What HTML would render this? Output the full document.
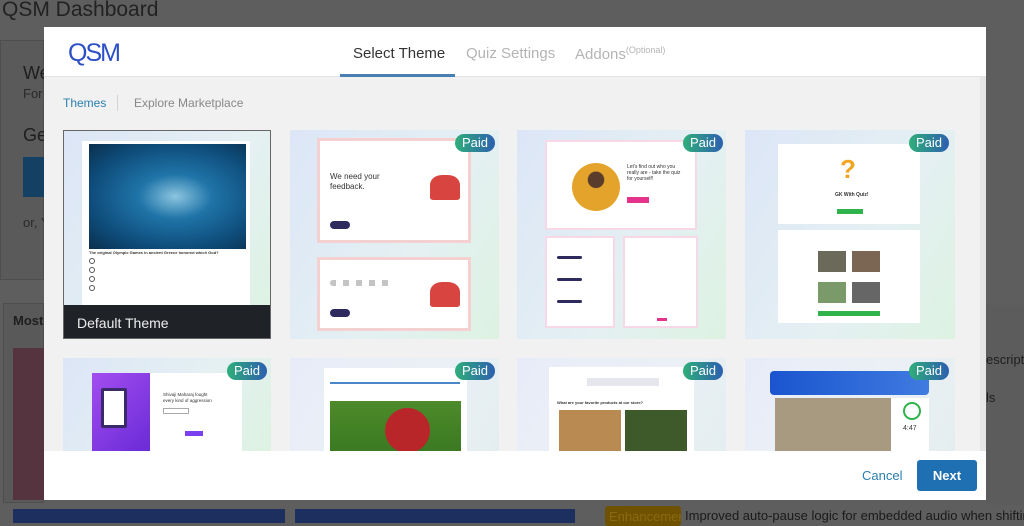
<!DOCTYPE html>
<html><head><meta charset="utf-8"><style>
*{margin:0;padding:0;box-sizing:border-box}
body{width:1024px;height:523px;overflow:hidden;background:#5e5e5e;font-family:"Liberation Sans",sans-serif;position:relative}
.a{position:absolute}
.paid{position:absolute;width:40px;height:18px;border-radius:9px;background:linear-gradient(90deg,#2fae7a,#2d5fb0);color:#fff;font-size:13px;line-height:18px;text-align:center}
.card{position:absolute;background:linear-gradient(120deg,#dce6f7,#e4f0f2 60%,#ddf2e2);overflow:hidden}
.w{position:absolute;background:#fff}
.bar{position:absolute;background:#2d2a5e;border-radius:4px}
</style></head><body>
<div class="a" style="left:2px;top:-2px;font-size:21px;color:#222">QSM Dashboard</div>
<div class="a" style="left:0;top:40px;width:44px;height:240px;background:#5a5a5a;border:1px solid #4e4e4e"></div>
<div class="a" style="left:23px;top:63px;font-size:18px;color:#1e1e1e">We</div>
<div class="a" style="left:23px;top:86px;font-size:13px;color:#2a2a2a">For</div>
<div class="a" style="left:23px;top:125px;font-size:18px;color:#1e1e1e">Ge</div>
<div class="a" style="left:23px;top:157px;width:21px;height:40px;background:#144063"></div>
<div class="a" style="left:23px;top:215px;font-size:13px;color:#2a2a2a">or, Y</div>
<div class="a" style="left:3px;top:303px;width:41px;height:200px;background:#595959;border:1px solid #4e4e4e"></div>
<div class="a" style="left:13px;top:313px;font-size:13px;font-weight:bold;color:#1e1e1e">Most</div>
<div class="a" style="left:13px;top:348px;width:31px;height:152px;background:#56343f"></div>
<div class="a" style="left:13px;top:509px;width:272px;height:14px;background:#1c2f5e"></div>
<div class="a" style="left:295px;top:509px;width:280px;height:14px;background:#1c2f5e"></div>
<div class="a" style="left:986px;top:305px;width:38px;height:200px;background:#5c5c5c"></div>
<div class="a" style="left:986px;top:352px;font-size:13px;color:#1e1e1e;white-space:nowrap">escriptio</div>
<div class="a" style="left:986px;top:390px;font-size:13px;color:#1e1e1e">ls</div>
<div class="a" style="left:605px;top:506px;width:76px;height:20px;background:#6e5200;border-radius:3px;color:#8a6a10;font-size:13px;padding:3px 4px;overflow:hidden;white-space:nowrap">Enhancement</div>
<div class="a" style="left:685px;top:508px;font-size:13px;color:#1a1a1a;white-space:nowrap">Improved auto-pause logic for embedded audio when shifting page</div>

<div class="a" style="left:44px;top:27px;width:942px;height:473px;background:#f1f1f1"></div>
<div class="a" style="left:44px;top:27px;width:942px;height:50px;background:#fff;border-bottom:1px solid #e2e2e2"></div>
<div class="a" style="left:68px;top:39px;font-size:25px;color:#2d4fc5;letter-spacing:-2px">QSM</div>
<div class="a" style="left:353px;top:45px;font-size:15px;color:#333">Select Theme</div>
<div class="a" style="left:340px;top:74px;width:115px;height:3px;background:#4a7fb3"></div>
<div class="a" style="left:466px;top:45px;font-size:15px;color:#b4b4b4">Quiz Settings</div>
<div class="a" style="left:575px;top:45px;font-size:15px;color:#b4b4b4">Addons<sup style="font-size:9px">(Optional)</sup></div>
<div class="a" style="left:63px;top:96px;font-size:12px;color:#2b7fb0">Themes</div>
<div class="a" style="left:117px;top:95px;width:1px;height:16px;background:#d4d4d4"></div>
<div class="a" style="left:134px;top:96px;font-size:12px;color:#888">Explore Marketplace</div>
<div class="a" style="left:980px;top:77px;width:6px;height:374px;background:#e6e6e6"></div>

<div class="card" style="left:63px;top:130px;width:208px;height:209px;border:1px solid #666">
 <div class="w" style="left:18px;top:10px;width:168px;height:170px"></div>
 <div class="a" style="left:25px;top:13px;width:157px;height:105px;background:radial-gradient(ellipse at 55% 50%,#8cc5e0 0%,#1f74a8 30%,#0e4c7a 70%,#0a2f4d)"></div>
 <div class="a" style="left:25px;top:119px;font-size:4px;color:#333;font-weight:bold">The original Olympic Games in ancient Greece honored which God?</div>
 <div class="a" style="left:25px;top:127px;width:6px;height:6px;border:1px solid #555;border-radius:50%"></div>
 <div class="a" style="left:25px;top:136px;width:6px;height:6px;border:1px solid #555;border-radius:50%"></div>
 <div class="a" style="left:25px;top:145px;width:6px;height:6px;border:1px solid #555;border-radius:50%"></div>
 <div class="a" style="left:25px;top:154px;width:6px;height:6px;border:1px solid #555;border-radius:50%"></div>
 <div class="a" style="left:0;top:174px;width:208px;height:35px;background:#1f2226;color:#eee;font-size:14px;padding:10px 13px">Default Theme</div>
</div>
<div class="card" style="left:290px;top:130px;width:209px;height:209px">
 <div class="w" style="left:27px;top:8px;width:154px;height:105px;border:3px solid #f5d0d0"></div>
 <div class="a" style="left:40px;top:42px;font-size:8px;color:#333;line-height:10px">We need your<br>feedback.</div>
 <div class="a" style="left:140px;top:45px;width:30px;height:25px;background:#d8443f;border-radius:40% 40% 10% 10%"></div>
 <div class="bar" style="left:40px;top:91px;width:20px;height:8px"></div>
 <div class="w" style="left:27px;top:127px;width:154px;height:74px;border:3px solid #f5d0d0"></div>
 <div class="a" style="left:40px;top:150px;width:65px;height:6px;background:repeating-linear-gradient(90deg,#888 0 6px,transparent 6px 13px);border-radius:3px;opacity:.5"></div>
 <div class="a" style="left:140px;top:152px;width:30px;height:25px;background:#d8443f;border-radius:40% 40% 10% 10%"></div>
 <div class="bar" style="left:40px;top:179px;width:20px;height:8px"></div>
</div>
<div class="card" style="left:517px;top:130px;width:209px;height:209px">
 <div class="w" style="left:28px;top:10px;width:152px;height:90px;border:2px solid #f6d8e6"></div>
 <div class="a" style="left:55px;top:33px;width:48px;height:48px;border-radius:50%;background:radial-gradient(circle at 50% 35%,#5a3c2c 20%,#e4a42c 22%)"></div>
 <div class="a" style="left:110px;top:34px;font-size:5px;color:#333;width:55px;line-height:6px">Let's find out who you really are - take the quiz for yourself!</div>
 <div class="a" style="left:110px;top:67px;width:22px;height:6px;background:#e5338c"></div>
 <div class="w" style="left:28px;top:106px;width:70px;height:92px;border:2px solid #f6d8e6"></div>
 <div class="w" style="left:106px;top:106px;width:75px;height:92px;border:2px solid #f6d8e6"></div>
 <div class="bar" style="left:40px;top:126px;width:25px;height:3px"></div>
 <div class="bar" style="left:40px;top:148px;width:25px;height:3px"></div>
 <div class="bar" style="left:40px;top:170px;width:25px;height:3px"></div>
 <div class="a" style="left:140px;top:188px;width:10px;height:3px;background:#e5338c"></div>
</div>
<div class="card" style="left:745px;top:130px;width:210px;height:209px">
 <div class="w" style="left:33px;top:14px;width:142px;height:80px"></div>
 <div class="a" style="left:95px;top:24px;font-size:26px;color:#f2a521;font-weight:bold">?</div>
 <div class="a" style="left:90px;top:62px;font-size:5px;color:#333;font-weight:bold">GK With Quiz!</div>
 <div class="a" style="left:92px;top:79px;width:26px;height:5px;background:#2fb34a"></div>
 <div class="w" style="left:33px;top:100px;width:142px;height:93px"></div>
 <div class="a" style="left:73px;top:121px;width:28px;height:21px;background:#6b6a5a"></div>
 <div class="a" style="left:107px;top:121px;width:28px;height:21px;background:#7a6652"></div>
 <div class="a" style="left:73px;top:152px;width:28px;height:21px;background:#7b9a6a"></div>
 <div class="a" style="left:107px;top:152px;width:28px;height:21px;background:#666"></div>
 <div class="a" style="left:73px;top:181px;width:62px;height:5px;background:#2fb34a"></div>
</div>
<div class="card" style="left:63px;top:358px;width:208px;height:93px">
 <div class="a" style="left:29px;top:15px;width:58px;height:78px;background:linear-gradient(135deg,#a24df0,#6a2bd6)"></div>
 <div class="a" style="left:38px;top:30px;width:26px;height:40px;background:#fff;border:3px solid #3a2a6a;border-radius:2px"></div>
 <div class="w" style="left:87px;top:15px;width:92px;height:78px"></div>
 <div class="a" style="left:100px;top:34px;font-size:4.5px;color:#333;line-height:6px">Shivaji Maharaj fought<br>every kind of aggression</div>
 <div class="a" style="left:100px;top:50px;width:26px;height:6px;border:1px solid #aaa"></div>
 <div class="a" style="left:122px;top:73px;width:18px;height:5px;background:#7b3ff0"></div>
</div>
<div class="card" style="left:290px;top:358px;width:209px;height:93px;background:linear-gradient(120deg,#e8ecf8,#eaf0f6 60%,#e4eef0)">
 <div class="w" style="left:34px;top:10px;width:143px;height:83px"></div>
 <div class="a" style="left:40px;top:24px;width:130px;height:2px;background:#4a86c8"></div>
 <div class="a" style="left:40px;top:43px;width:131px;height:50px;background:linear-gradient(180deg,#4d8a2a,#3b7a22)"></div>
 <div class="a" style="left:95px;top:50px;width:45px;height:45px;border-radius:50%;background:#b8262a"></div>
</div>
<div class="card" style="left:517px;top:358px;width:209px;height:93px;background:linear-gradient(120deg,#e8ecf8,#eaf0f6 60%,#e4eef0)">
 <div class="w" style="left:32px;top:9px;width:145px;height:84px"></div>
 <div class="a" style="left:70px;top:20px;width:72px;height:8px;background:#e6e6ee"></div>
 <div class="a" style="left:40px;top:42px;font-size:4px;color:#333;font-weight:bold">What are your favorite products at our store?</div>
 <div class="a" style="left:42px;top:52px;width:62px;height:41px;background:#b98a52"></div>
 <div class="a" style="left:108px;top:52px;width:62px;height:41px;background:#3f5a2a"></div>
</div>
<div class="card" style="left:745px;top:358px;width:210px;height:93px;background:linear-gradient(120deg,#e8ecf8,#eaf0f6 60%,#e4eef0)">
 <div class="a" style="left:25px;top:13px;width:159px;height:24px;background:linear-gradient(90deg,#1a55cf,#3f7be0);border-radius:4px"></div>
 <div class="w" style="left:30px;top:40px;width:154px;height:53px"></div>
 <div class="a" style="left:30px;top:40px;width:116px;height:53px;background:#a89a80"></div>
 <div class="a" style="left:158px;top:44px;width:18px;height:18px;border:2px solid #2fb34a;border-radius:50%"></div>
 <div class="a" style="left:158px;top:67px;font-size:7px;color:#333">4:47</div>
</div>
<div class="paid" style="left:455px;top:134px">Paid</div>
<div class="paid" style="left:683px;top:134px">Paid</div>
<div class="paid" style="left:909px;top:134px">Paid</div>
<div class="paid" style="left:227px;top:362px">Paid</div>
<div class="paid" style="left:455px;top:362px">Paid</div>
<div class="paid" style="left:683px;top:362px">Paid</div>
<div class="paid" style="left:909px;top:362px">Paid</div>

<div class="a" style="left:44px;top:451px;width:942px;height:49px;background:#fff"></div>
<div class="a" style="left:862px;top:468px;font-size:13px;color:#2b7fb0">Cancel</div>
<div class="a" style="left:917px;top:460px;width:60px;height:31px;background:#1f6fb3;border-radius:3px;color:#fff;font-size:13px;font-weight:bold;text-align:center;line-height:31px">Next</div>
</body></html>
